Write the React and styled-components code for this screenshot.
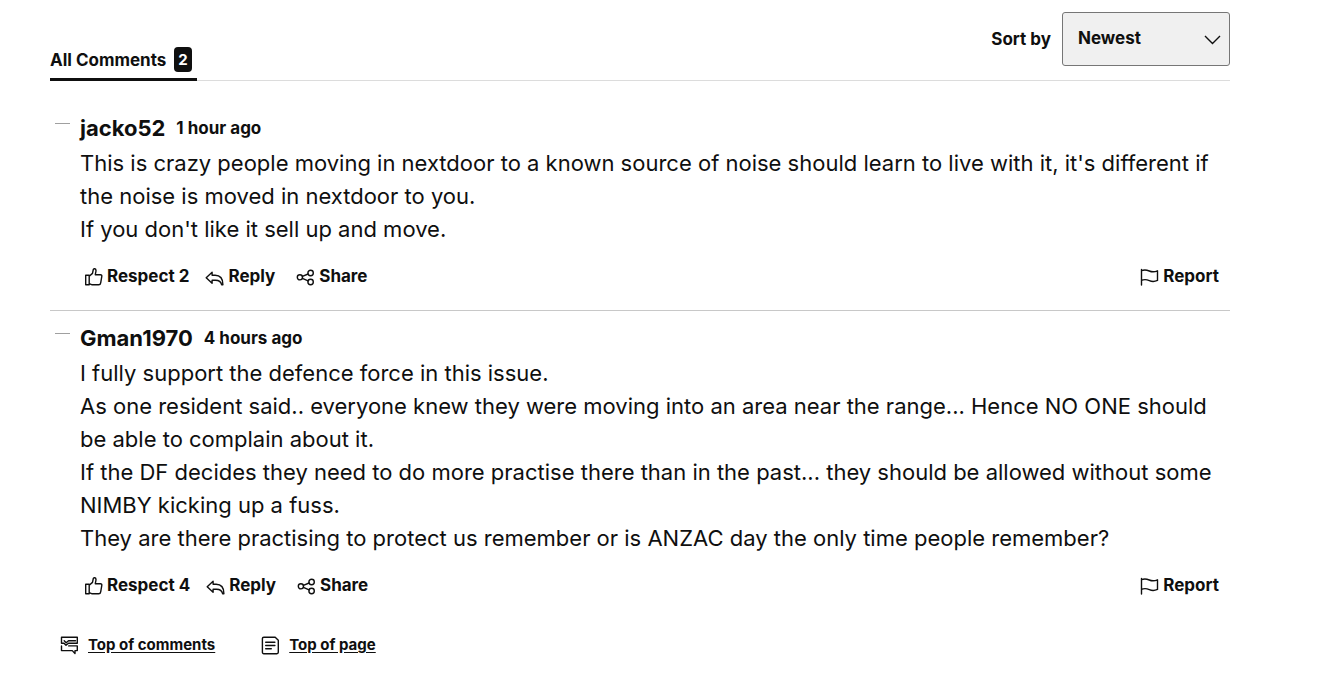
import React, { useState } from 'react'
import styled, { createGlobalStyle } from 'styled-components'

const GlobalStyle = createGlobalStyle`
  body {
    margin: 0;
    background: white;
    color: #0f0f0f;
    font-family: Inter, "Liberation Sans", sans-serif;
  }
  button, select {
    font-family: inherit;
    color: inherit;
  }
`

const Page = styled.main`
  padding: 12px 92px 24px 50px;
`

const TopBar = styled.header`
  display: flex;
  justify-content: space-between;
  align-items: flex-end;
  border-bottom: 1px solid #dcdcdc;
`

const Tab = styled.button`
  display: flex;
  align-items: center;
  gap: 8px;
  margin-bottom: -1px;
  padding: 0 5px 6px 0;
  border: 0;
  border-bottom: 3px solid #0f0f0f;
  background: none;
  font-size: 17px;
  font-weight: 700;
`

const Count = styled.span`
  padding: 0 4px;
  border-radius: 4px;
  background: #0f0f0f;
  color: white;
  font-size: 15px;
  line-height: 25px;
`

const Sort = styled.div`
  display: flex;
  align-items: center;
  gap: 11px;
  margin-bottom: 14px;
`

const SortLabel = styled.label`
  font-size: 17px;
  font-weight: 700;
`

const SelectWrapper = styled.div`
  position: relative;
  width: 168px;
`

const Select = styled.select`
  width: 100%;
  height: 54px;
  padding: 0 40px 2px 15px;
  appearance: none;
  border: 1px solid #767676;
  border-radius: 3px;
  background: #f0f0f0;
  font-size: 17px;
  font-weight: 700;
`

const Chevron = styled.svg`
  position: absolute;
  top: 22px;
  right: 9px;
  pointer-events: none;
`

const List = styled.section`
  padding-top: 20px;
`

const CommentWrapper = styled.article`
  padding: 10px 0 18px;
  border-bottom: 1px solid #c8c8c8;
  &:last-child {
    border-bottom: 0;
  }
`

const CommentHeader = styled.div`
  display: flex;
  align-items: center;
  height: 33px;
  padding-left: 5px;
`

const Collapse = styled.button`
  width: 15px;
  height: 14px;
  margin-right: 10px;
  padding: 0 0 8px;
  border: 0;
  background: none;
  &::before {
    content: '';
    display: block;
    height: 1px;
    background: #a0a0a0;
  }
`

const Author = styled.span`
  margin-right: 11px;
  font-size: 22px;
  font-weight: 700;
`

const Time = styled.time`
  font-size: 17px;
  font-weight: 700;
`

const Body = styled.div`
  padding: 3px 0 14px 30px;
  font-size: 22px;
  line-height: 33px;
`

const Paragraph = styled.p`
  margin: 0;
`

const Actions = styled.div`
  display: flex;
  align-items: center;
  height: 32px;
  padding: 0 11px 0 34px;
`

const ActionButton = styled.button`
  display: flex;
  align-items: center;
  gap: 4px;
  margin-right: ${props => props.$gap || 0}px;
  margin-left: ${props => props.$end ? 'auto' : 0};
  padding: 0;
  border: 0;
  background: none;
  font-size: 17px;
  font-weight: 700;
  line-height: 24px;
`

const Icon = styled.svg`
  flex: none;
  width: 19px;
  height: 19px;
  fill: none;
  stroke: #0f0f0f;
  stroke-width: 1.4;
  stroke-linejoin: round;
  stroke-linecap: round;
`

const Links = styled.nav`
  display: flex;
  gap: 46px;
  padding: 14px 10px 0;
`

const JumpLink = styled.a`
  display: flex;
  align-items: center;
  gap: 9px;
  color: inherit;
  font-size: 15px;
  font-weight: 700;
  line-height: 24px;
  text-underline-offset: 2px;
`

const ThumbIcon = () => (
    <Icon viewBox="0 0 19 19" aria-hidden="true">
        <path d="M1.7 8.2H5.2v9.6H1.7zM5.2 9.3l3.3-2.9.8-3.9c.3-1.3 2.7-1 2.7 1.1 0 1.7-.7 2.7-.7 4.2h5.2c1 0 1.5.7 1.3 1.6l-1.1 6.4c-.2 1.3-.9 2-2 2H8.2l-3-1.2" />
    </Icon>
)

const ReplyIcon = () => (
    <Icon viewBox="0 0 19 19" aria-hidden="true">
        <path d="M1.2 10.7l5.9-5.5v3.1h3c4.8 0 7.8 3.5 7.8 9.4h-1.3c-.6-3-2.6-4.5-6.1-4.5H7.1v3.1z" />
    </Icon>
)

const ShareIcon = () => (
    <Icon viewBox="0 0 19 19" aria-hidden="true">
        <circle cx="3.9" cy="10.3" r="2.6" />
        <circle cx="14.6" cy="6" r="2.7" />
        <circle cx="14.6" cy="15" r="2.7" />
        <path d="M6.4 9.3l5.7-2.3M6.4 11.4l5.7 2.5" />
    </Icon>
)

const FlagIcon = () => (
    <Icon viewBox="0 0 19 19" aria-hidden="true">
        <path d="M1.5 2.5V18M1.5 3.7c3-1.4 5.3-.8 7.8.3 2.7 1.2 5.1 1.2 8.2-.2v9.6c-3 1.4-5.5 1.4-8.2.2-2.5-1.1-4.8-1.6-7.8-.2" />
    </Icon>
)

const CommentsIcon = () => (
    <Icon viewBox="0 0 19 19" aria-hidden="true">
        <path d="M1.5 1.3h15.8v5.9H8.5L6 9.3 4 7.2H1.5zM4.2 4.8l2 2 2.3-2h7M1.5 10v4.6h10.8l2.7 3v-3h2.3V9.9H8.7" />
    </Icon>
)

const PageIcon = () => (
    <Icon viewBox="0 0 19 19" aria-hidden="true">
        <path d="M2.8 1.2h11.4l3.1 3v12.1c0 .9-.6 1.4-1.4 1.4H2.8c-.8 0-1.4-.5-1.4-1.4V2.6c0-.8.6-1.4 1.4-1.4zM4.7 6.2h9.2M4.7 9.5h9.2M4.7 12.8h5.6" />
    </Icon>
)

const comments = [
    {
        author: 'jacko52',
        time: '1 hour ago',
        respect: 2,
        lines: [
            "This is crazy people moving in nextdoor to a known source of noise should learn to live with it, it's different if the noise is moved in nextdoor to you.",
            "If you don't like it sell up and move."
        ]
    },
    {
        author: 'Gman1970',
        time: '4 hours ago',
        respect: 4,
        lines: [
            'I fully support the defence force in this issue.',
            'As one resident said.. everyone knew they were moving into an area near the range... Hence NO ONE should be able to complain about it.',
            'If the DF decides they need to do more practise there than in the past... they should be allowed without some NIMBY kicking up a fuss.',
            'They are there practising to protect us remember or is ANZAC day the only time people remember?'
        ]
    }
]

const Comment = ({ author, time, respect, lines }) => (
    <CommentWrapper>
        <CommentHeader>
            <Collapse aria-label={`Collapse comment by ${author}`} />
            <Author>{author}</Author>
            <Time>{time}</Time>
        </CommentHeader>
        <Body>
            {lines.map(line => <Paragraph key={line}>{line}</Paragraph>)}
        </Body>
        <Actions>
            <ActionButton $gap={16}><ThumbIcon />Respect {respect}</ActionButton>
            <ActionButton $gap={21}><ReplyIcon />Reply</ActionButton>
            <ActionButton><ShareIcon />Share</ActionButton>
            <ActionButton $end><FlagIcon />Report</ActionButton>
        </Actions>
    </CommentWrapper>
)

const App = () => {
    const [sort, setSort] = useState('newest')

    return (
        <Page id="top">
            <GlobalStyle />
            <TopBar id="comments">
                <Tab>All Comments <Count>2</Count></Tab>
                <Sort>
                    <SortLabel htmlFor="sort">Sort by</SortLabel>
                    <SelectWrapper>
                        <Select id="sort" value={sort} onChange={e => setSort(e.target.value)}>
                            <option value="newest">Newest</option>
                            <option value="oldest">Oldest</option>
                        </Select>
                        <Chevron width="17" height="12" viewBox="0 0 17 12" fill="none" stroke="#0f0f0f" strokeWidth="1.4" aria-hidden="true">
                            <path d="M1 2l7.5 7.5L16 2" />
                        </Chevron>
                    </SelectWrapper>
                </Sort>
            </TopBar>
            <List>
                {comments.map(comment => <Comment key={comment.author} {...comment} />)}
            </List>
            <Links>
                <JumpLink href="#comments"><CommentsIcon />Top of comments</JumpLink>
                <JumpLink href="#top"><PageIcon />Top of page</JumpLink>
            </Links>
        </Page>
    )
}

export default App
